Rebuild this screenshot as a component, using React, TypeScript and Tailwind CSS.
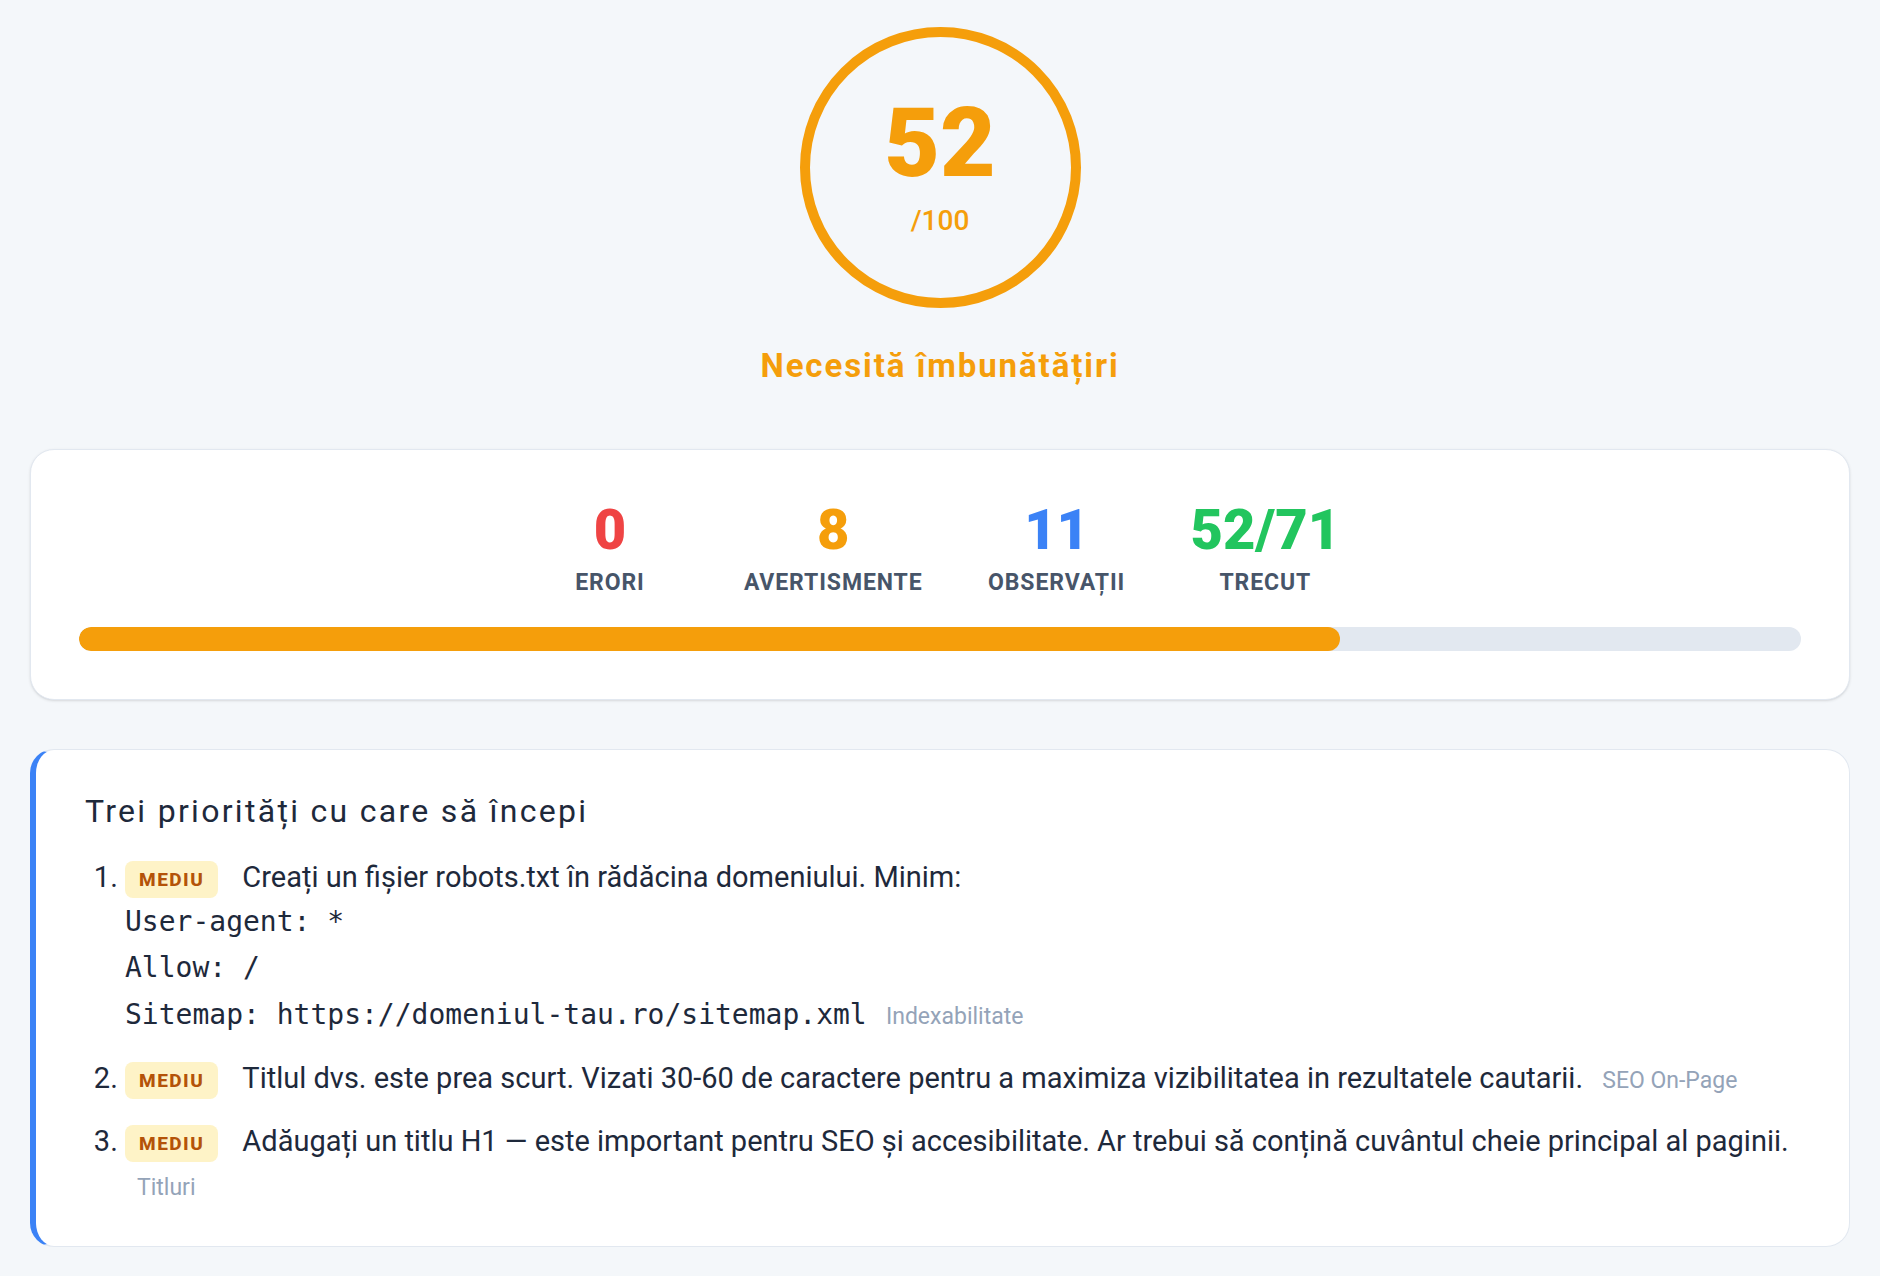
import React from "react";

const stats = [
  { value: "0", label: "ERORI", color: "text-[#ef4444]" },
  { value: "8", label: "AVERTISMENTE", color: "text-[#f59e0b]" },
  { value: "11", label: "OBSERVAȚII", color: "text-[#3b82f6]" },
  { value: "52/71", label: "TRECUT", color: "text-[#22c55e]" },
];

function Badge() {
  return (
    <span className="inline-block align-middle rounded-lg bg-[#fef3c7] px-[14px] py-[6px] mr-6 text-[19px] leading-[25px] font-extrabold tracking-[1.5px] text-[#b45309]">
      MEDIU
    </span>
  );
}

function Category({ children }: { children: React.ReactNode }) {
  return <span className="ml-3 text-[23px] text-[#94a3b8]">{children}</span>;
}

export default function App() {
  const passed = 52;
  const total = 71;

  return (
    <div className="min-h-screen bg-[#f4f7fa] px-[30px] pt-[27px] pb-10 font-['Roboto',sans-serif] text-[#1e293b]">
      {/* Score ring */}
      <div className="mx-auto flex h-[281px] w-[281px] flex-col items-center justify-center rounded-full border-[10px] border-[#f59e0b] pb-[6px] text-[#f59e0b]">
        <div className="text-[96px] font-black leading-none">52</div>
        <div className="mt-[16px] text-[28px] font-medium leading-none">/100</div>
      </div>
      <h2 className="mt-[34px] text-center text-[33px] font-bold leading-[48px] tracking-[1.9px] text-[#f59e0b]">
        Necesită îmbunătățiri
      </h2>

      {/* Stats */}
      <section className="mt-[59px] rounded-3xl border border-[#e2e8f0] bg-white px-12 pt-[50px] pb-12 shadow-sm">
        <div className="flex justify-center gap-16">
          {stats.map((s) => (
            <div key={s.label} className="min-w-[140px] text-center">
              <div className={`text-[56px] font-black leading-[60px] ${s.color}`}>{s.value}</div>
              <div className="mt-[9px] text-[23px] font-bold leading-[28px] tracking-[0.9px] text-[#475569]">{s.label}</div>
            </div>
          ))}
        </div>
        <div className="mt-[30px] h-6 w-full overflow-hidden rounded-full bg-[#e2e8f0]">
          <div className="h-full rounded-full bg-[#f59e0b]" style={{ width: `${(passed / total) * 100}%` }} />
        </div>
      </section>

      {/* Priorities */}
      <section className="mt-[49px] rounded-3xl border border-[#e2e8f0] border-l-[6px] border-l-[#3b82f6] bg-white pl-[49px] pr-12 pt-[37px] pb-[36px]">
        <h3 className="text-[32px] leading-[48px] tracking-[2.3px]">Trei priorități cu care să începi</h3>
        <ol className="mt-[20px] list-decimal space-y-4 pl-10 text-[29px] leading-[44px]">
          <li>
            <Badge />
            <span>Creați un fișier robots.txt în rădăcina domeniului. Minim:</span>
            <div className="font-['DejaVu_Sans_Mono',monospace] text-[28px] leading-[46px]">
              <div>User-agent: *</div>
              <div>Allow: /</div>
              <div>
                Sitemap: https://domeniul-tau.ro/sitemap.xml
                <span className="font-['Roboto',sans-serif] text-[29px]">
                  {" "}
                  <Category>Indexabilitate</Category>
                </span>
              </div>
            </div>
          </li>
          <li>
            <Badge />
            <span>Titlul dvs. este prea scurt. Vizati 30-60 de caractere pentru a maximiza vizibilitatea in rezultatele cautarii.</span>{" "}
            <Category>SEO On-Page</Category>
          </li>
          <li>
            <Badge />
            <span>Adăugați un titlu H1 — este important pentru SEO și accesibilitate. Ar trebui să conțină cuvântul cheie principal al paginii.</span>{" "}
            <Category>Titluri</Category>
          </li>
        </ol>
      </section>
    </div>
  );
}
